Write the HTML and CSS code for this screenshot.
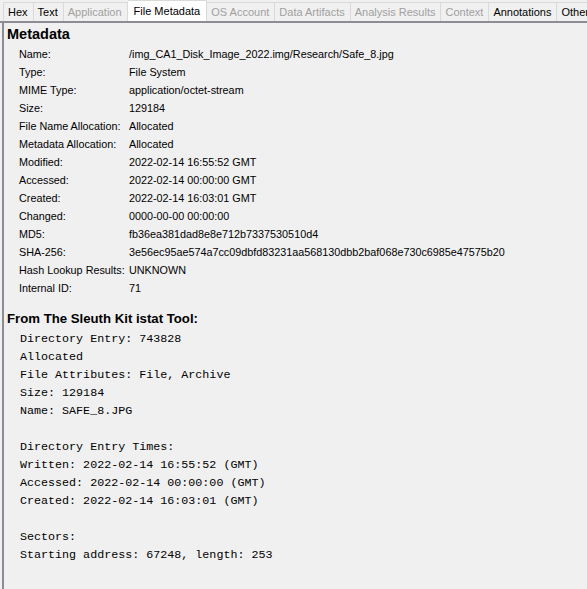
FILE: index.html
```html
<!DOCTYPE html>
<html>
<head>
<meta charset="utf-8">
<link rel="stylesheet" href="styles.css">
</head>
<body>
<div class="tabs">
  <div class="tab">Hex</div>
  <div class="tab">Text</div>
  <div class="tab dis">Application</div>
  <div class="tab sel">File Metadata</div>
  <div class="tab dis">OS Account</div>
  <div class="tab dis">Data Artifacts</div>
  <div class="tab dis">Analysis Results</div>
  <div class="tab dis">Context</div>
  <div class="tab">Annotations</div>
  <div class="tab">Other</div>
</div>
<div class="panel">
  <div class="h1">Metadata</div>
  <div class="grid">
    <div>Name:</div><div>/img_CA1_Disk_Image_2022.img/Research/Safe_8.jpg</div>
    <div>Type:</div><div>File System</div>
    <div>MIME Type:</div><div>application/octet-stream</div>
    <div>Size:</div><div>129184</div>
    <div>File Name Allocation:</div><div>Allocated</div>
    <div>Metadata Allocation:</div><div>Allocated</div>
    <div>Modified:</div><div>2022-02-14 16:55:52 GMT</div>
    <div>Accessed:</div><div>2022-02-14 00:00:00 GMT</div>
    <div>Created:</div><div>2022-02-14 16:03:01 GMT</div>
    <div>Changed:</div><div>0000-00-00 00:00:00</div>
    <div>MD5:</div><div>fb36ea381dad8e8e712b7337530510d4</div>
    <div>SHA-256:</div><div>3e56ec95ae574a7cc09dbfd83231aa568130dbb2baf068e730c6985e47575b20</div>
    <div>Hash Lookup Results:</div><div>UNKNOWN</div>
    <div>Internal ID:</div><div>71</div>
  </div>
  <div class="h2">From The Sleuth Kit istat Tool:</div>
  <pre class="mono">Directory Entry: 743828
Allocated
File Attributes: File, Archive
Size: 129184
Name: SAFE_8.JPG

Directory Entry Times:
Written: 2022-02-14 16:55:52 (GMT)
Accessed: 2022-02-14 00:00:00 (GMT)
Created: 2022-02-14 16:03:01 (GMT)

Sectors:
Starting address: 67248, length: 253</pre>
</div>
</body>
</html>
```

FILE: styles.css
```css
html, body {
  margin: 0;
  padding: 0;
  background: #f0f0f0;
  height: 100%;
  overflow: hidden;
}
body {
  font-family: "Liberation Sans", Arial, sans-serif;
  font-size: 11px;
  color: #000;
  display: flex;
  flex-direction: column;
}
.tabs {
  display: flex;
  padding: 2px 0 0 3px;
  height: 19px;
  border-bottom: 2px solid #8c8c94;
  white-space: nowrap;
}
.tab {
  height: 19px;
  line-height: 19px;
  padding: 0 5px 0 4px;
  border-right: 1px solid #d9d9d9;
  border-top: 1px solid #d9d9d9;
  box-sizing: border-box;
  background: #f0f0f0;
  flex: none;
}
.tab:first-child {
  border-left: 1px solid #d9d9d9;
}
.tab.dis {
  color: #a0a0a0;
}
.tab.sel {
  background: #ffffff;
  height: 21px;
  margin-top: -2px;
  line-height: 21px;
  padding: 0 6px;
}
.panel {
  flex: 1;
  margin-left: 2px;
  border-left: 2px solid #8c8c94;
  padding: 3px 0 0 3px;
}
.h1 {
  font-weight: bold;
  font-size: 14.5px;
  line-height: 17px;
  margin: 0 0 2px 0;
}
.grid {
  display: grid;
  grid-template-columns: 110px auto;
  padding-left: 12px;
  line-height: 18px;
  font-size: 10.8px;
  white-space: nowrap;
}
.h2 {
  font-weight: bold;
  font-size: 13.2px;
  line-height: 17px;
  margin-top: 13px;
}
.mono {
  font-family: "Liberation Mono", "Courier New", monospace;
  font-size: 11.7px;
  line-height: 18px;
  margin: 3px 0 0 13px;
}
```
